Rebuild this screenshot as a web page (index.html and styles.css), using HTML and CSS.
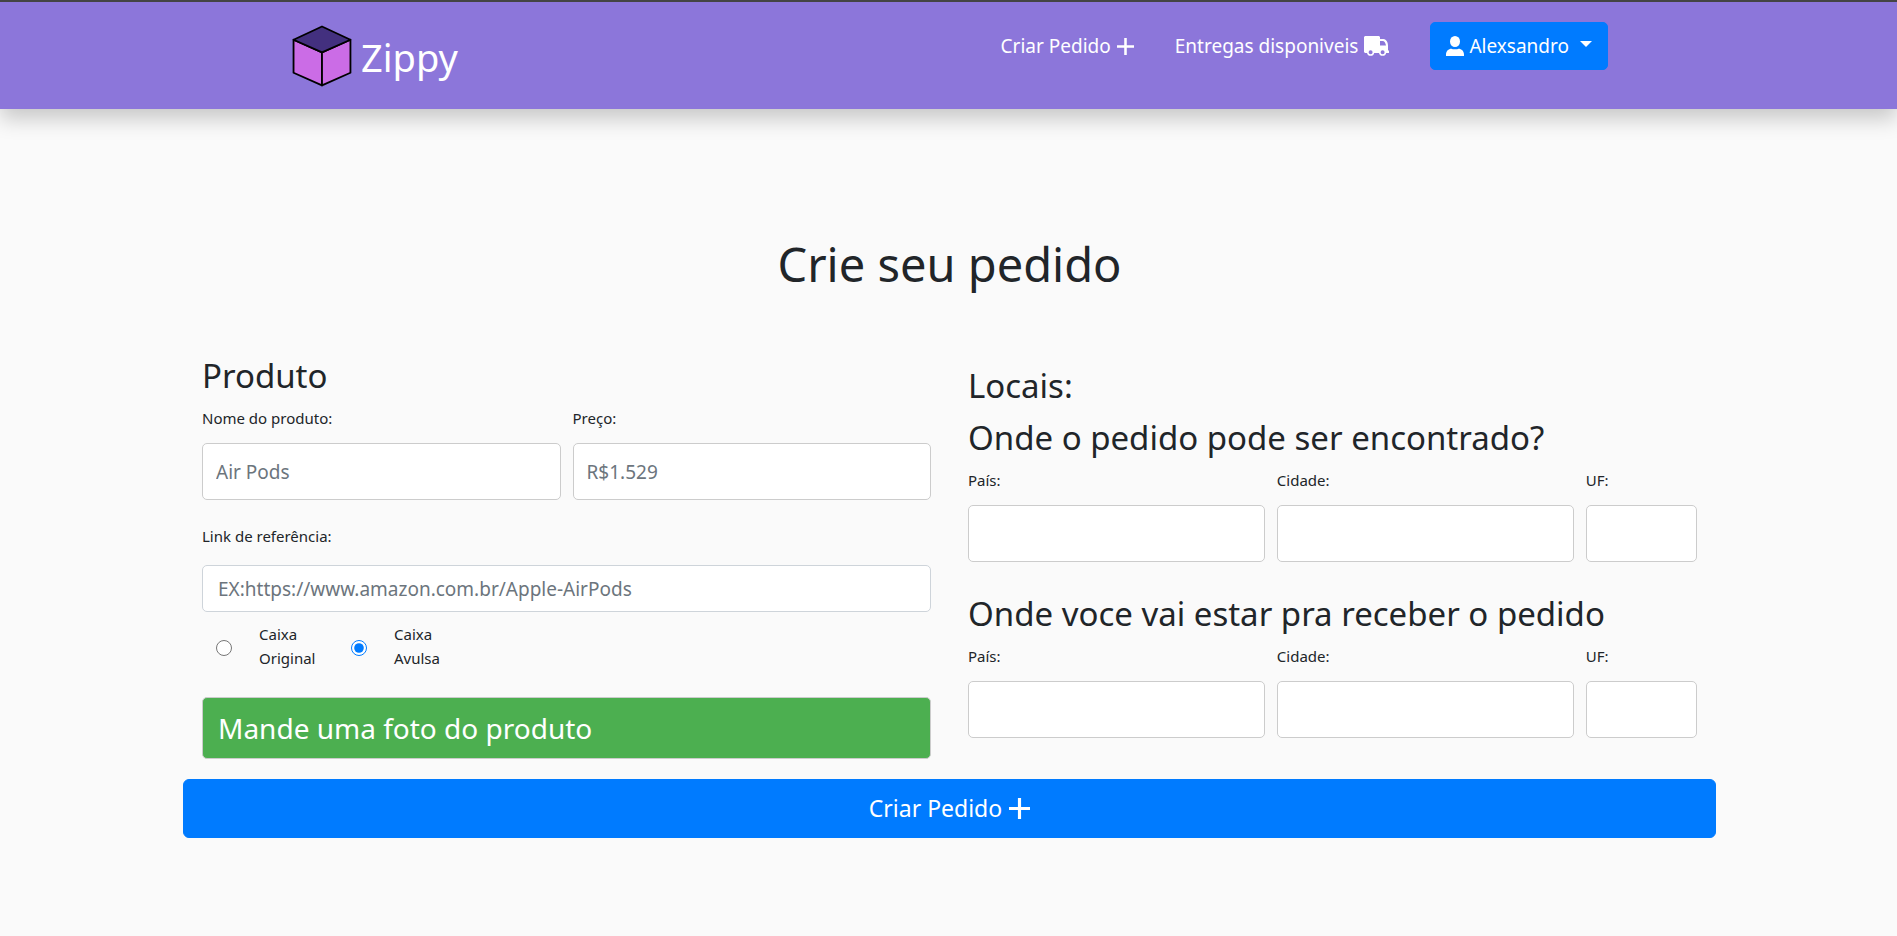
FILE: index.html
```html
<!DOCTYPE html>
<html lang="pt-BR">
<head>
<meta charset="utf-8">
<title>Zippy - Criar pedido</title>
<meta name="viewport" content="width=device-width, initial-scale=1">
<link rel="stylesheet" href="styles.css">
</head>
<body>
<header class="topbar">
  <div class="topbar-inner">
    <a class="brand" href="#">
      <svg class="brand-logo" viewBox="0 0 60 62" aria-hidden="true">
        <g stroke="#000" stroke-width="1.8" stroke-linejoin="round">
          <path fill="#cb6ce6" d="M1.5 14.5 29.500 27v32.500L1.500 47z"/>
          <path fill="#cb6ce6" d="M57.500 14.500 29.500 27v32.500L57.500 47z"/>
          <path fill="#43307f" d="M29.500 1.500 57.500 14.500 29.500 27 1.500 14.500z"/>
        </g>
      </svg>
      <span>Zippy</span>
    </a>
    <nav class="nav">
      <a class="nav-link" href="#">Criar Pedido
        <svg class="icon-plus" viewBox="0 0 16 16" aria-hidden="true"><path d="M8 0v16M0 8h16"/></svg>
      </a>
      <a class="nav-link" href="#">Entregas disponiveis
        <svg class="icon-truck" viewBox="0 0 25 20" aria-hidden="true"><path fill="currentColor" fill-rule="evenodd" d="M1 0H15L16 1V3H19.500C22.500 3.500 24 6.500 24 9.500V14L25 15V17H22.200A3.700 3.700 0 0 1 15 17H10.200A3.700 3.700 0 0 1 3 17H1L0 16V1zM16 5V9.500H22C21.500 7 20.500 5 18.500 5zM6.600 14.200a2 2 0 1 0 0 4a2 2 0 0 0 0-4zM18.600 14.200a2 2 0 1 0 0 4a2 2 0 0 0 0-4z"/></svg>
      </a>
      <button class="user-btn" type="button">
        <svg class="icon-user" viewBox="0 0 18 20" aria-hidden="true"><ellipse cx="9" cy="5.500" rx="5" ry="5.500" fill="currentColor"/><path fill="currentColor" d="M0 20v-1.500c0-3.500 2.500-5.800 5.500-5.800 1 .8 6 .8 7 0 3 0 5.500 2.300 5.500 5.800v1.500z"/></svg>
        <span>Alexsandro</span>
        <span class="caret"></span>
      </button>
    </nav>
  </div>
</header>

<main class="page">
  <h1 class="title">Crie seu pedido</h1>
  <form class="order">
    <div class="columns">
      <section class="column">
        <h2 class="heading">Produto</h2>
        <div class="row">
          <div class="field">
            <label for="nome">Nome do produto:</label>
            <input class="input" id="nome" type="text" placeholder="Air Pods">
          </div>
          <div class="field">
            <label for="preco">Preço:</label>
            <input class="input" id="preco" type="text" placeholder="R$1.529">
          </div>
        </div>
        <div class="field link-field">
          <label for="link">Link de referência:</label>
          <input class="input input-link" id="link" type="text" placeholder="EX:https://www.amazon.com.br/Apple-AirPods">
        </div>
        <div class="radios">
          <div class="radio">
            <input type="radio" name="caixa" id="original">
            <label for="original">Caixa Original</label>
          </div>
          <div class="radio">
            <input type="radio" name="caixa" id="avulsa" checked>
            <label for="avulsa">Caixa Avulsa</label>
          </div>
        </div>
        <button class="photo-btn" type="button">Mande uma foto do produto</button>
      </section>

      <section class="column places">
        <h2 class="heading">Locais:</h2>
        <h2 class="heading">Onde o pedido pode ser encontrado?</h2>
        <div class="row">
          <div class="field wide">
            <label for="pais1">País:</label>
            <input class="input" id="pais1" type="text">
          </div>
          <div class="field wide">
            <label for="cidade1">Cidade:</label>
            <input class="input" id="cidade1" type="text">
          </div>
          <div class="field narrow">
            <label for="uf1">UF:</label>
            <input class="input" id="uf1" type="text">
          </div>
        </div>
        <h2 class="heading second">Onde voce vai estar pra receber o pedido</h2>
        <div class="row">
          <div class="field wide">
            <label for="pais2">País:</label>
            <input class="input" id="pais2" type="text">
          </div>
          <div class="field wide">
            <label for="cidade2">Cidade:</label>
            <input class="input" id="cidade2" type="text">
          </div>
          <div class="field narrow">
            <label for="uf2">UF:</label>
            <input class="input" id="uf2" type="text">
          </div>
        </div>
      </section>
    </div>
    <button class="submit-btn" type="submit">Criar Pedido
      <svg class="icon-plus big" viewBox="0 0 16 16" aria-hidden="true"><path d="M8 0v16M0 8h16"/></svg>
    </button>
  </form>
</main>
</body>
</html>
```

FILE: styles.css
```css
* {
  box-sizing: border-box;
}

body {
  margin: 0;
  background: #fafafa;
  color: #212529;
  font-family: "Noto Sans", sans-serif;
  font-size: 19px;
  line-height: 30px;
}

button,
input {
  font-family: inherit;
}

/* Top bar */
.topbar {
  border-top: 2px solid #444;
  background: #8c76da;
  box-shadow: 0 10px 20px rgba(0, 0, 0, 0.2);
}

.topbar-inner {
  display: flex;
  align-items: flex-start;
  justify-content: space-between;
  max-width: 1319px;
  margin: 0 auto;
  padding: 20px 0;
}

.brand {
  display: flex;
  align-items: center;
  gap: 8px;
  padding: 3px 0 1px 3px;
  color: #fff;
  font-size: 38px;
  line-height: 60px;
  text-decoration: none;
}

.brand-logo {
  width: 61px;
  height: 63px;
}

.nav {
  display: flex;
  align-items: center;
  gap: 41px;
}

.nav-link {
  display: flex;
  align-items: center;
  gap: 6px;
  color: #fff;
  text-decoration: none;
}

.icon-plus {
  width: 17px;
  height: 17px;
  fill: none;
  stroke: currentColor;
  stroke-width: 2.4;
}

.icon-truck {
  width: 25px;
  height: 20px;
}

.icon-user {
  width: 18px;
  height: 20px;
}

.user-btn {
  display: flex;
  align-items: center;
  gap: 5px;
  padding: 8px 15px;
  border: 1px solid #007bff;
  border-radius: 5px;
  background: #007bff;
  color: #fff;
  font-size: 19px;
  line-height: 30px;
}

.caret {
  margin: 0 0 4px 6px;
  border: 6px solid transparent;
  border-top-color: #fff;
  border-bottom: 0;
}

/* Order form */
.page {
  max-width: 1535px;
  margin: 0 auto;
  padding: 125px 0 96px 2px;
}

.title {
  margin: 0 0 60px;
  font-size: 47px;
  font-weight: 400;
  line-height: 60px;
  text-align: center;
}

.columns {
  display: grid;
  grid-template-columns: 1fr 1fr;
  gap: 37px;
  padding: 0 19px;
}

.heading {
  margin: 0 0 9px;
  font-size: 33px;
  font-weight: 400;
  line-height: 43px;
}

.places {
  padding-top: 10px;
}

.second {
  margin-top: 30px;
}

.row {
  display: flex;
  gap: 12px;
}

.field {
  display: flex;
  flex: 1;
  flex-direction: column;
  gap: 13px;
  min-width: 0;
}

.wide {
  flex: 8;
}

.narrow {
  flex: 3;
}

label {
  font-size: 15px;
  line-height: 24px;
}

.input {
  width: 100%;
  height: 57px;
  padding: 0 13px;
  border: 1px solid #ccc;
  border-radius: 5px;
  background: #fff;
  color: #495057;
  font-size: 19px;
}

.input::placeholder {
  color: #6c757d;
  opacity: 1;
}

.link-field {
  gap: 17px;
  margin-top: 24px;
}

.input-link {
  height: 47px;
  padding: 0 15px;
  border-color: #ced4da;
}

.radios {
  display: flex;
  gap: 34px;
  margin: 10px 0 27px;
  padding-left: 14px;
}

.radio {
  display: flex;
  align-items: center;
  gap: 27px;
}

.radio input {
  width: 16px;
  height: 16px;
  margin: 4px 0 0;
  accent-color: #007bff;
}

.radio label {
  width: 58px;
}

.photo-btn {
  display: block;
  width: 100%;
  padding: 8px 15px;
  border: 1px solid #ccc;
  border-radius: 5px;
  background: #4caf50;
  color: #fff;
  font-size: 28px;
  line-height: 44px;
  text-align: left;
}

.submit-btn {
  display: flex;
  align-items: center;
  justify-content: center;
  gap: 7px;
  width: 100%;
  margin-top: 20px;
  padding: 10px 20px;
  border: 1px solid #007bff;
  border-radius: 6px;
  background: #007bff;
  color: #fff;
  font-size: 23px;
  line-height: 37px;
}

.big {
  width: 21px;
  height: 21px;
}
```
